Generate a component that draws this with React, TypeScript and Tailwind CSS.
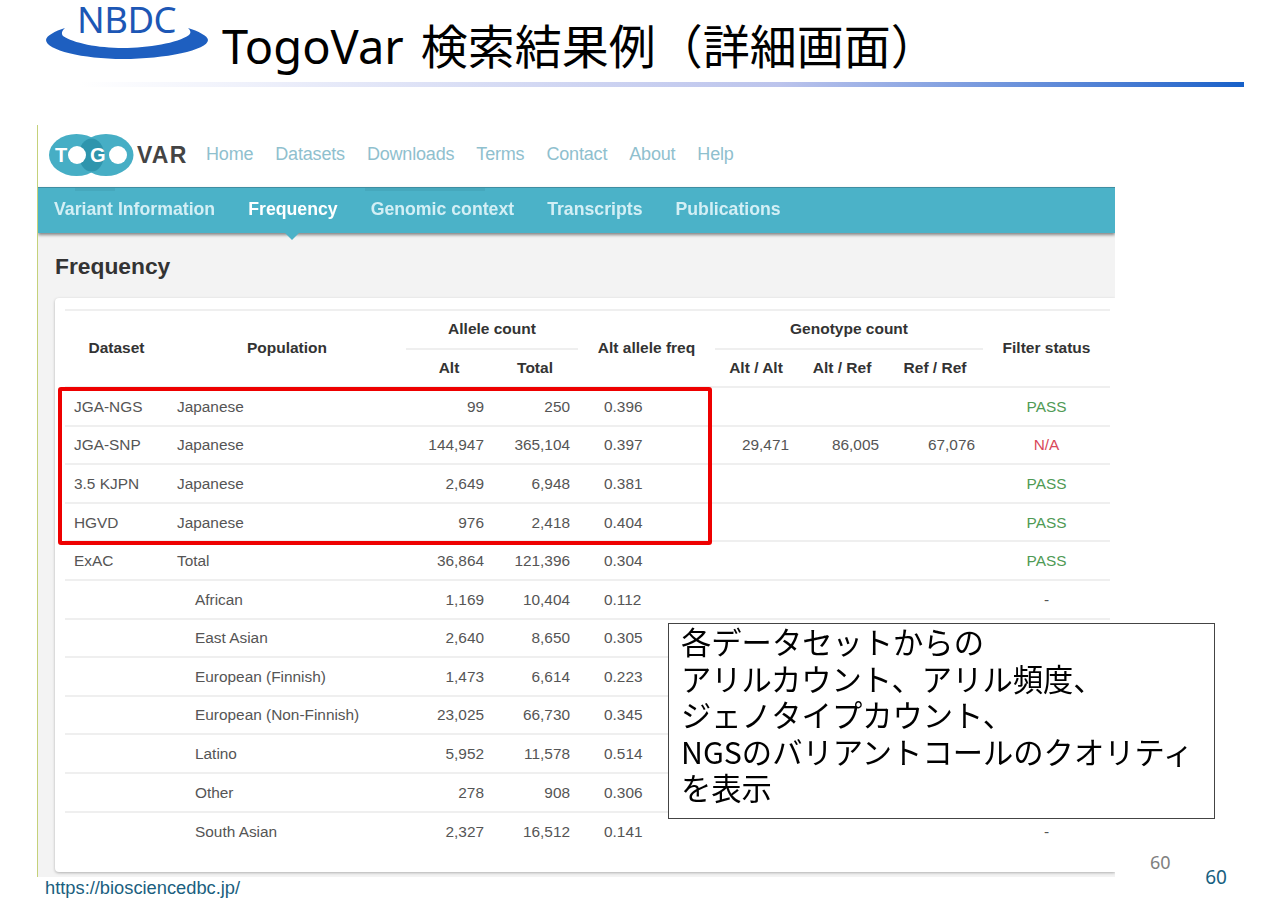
import React from "react";

const rows: [string, string, boolean, string, string, string, string, string, string, string][] = [
  ["JGA-NGS", "Japanese", false, "99", "250", "0.396", "", "", "", "PASS"],
  ["JGA-SNP", "Japanese", false, "144,947", "365,104", "0.397", "29,471", "86,005", "67,076", "N/A"],
  ["3.5 KJPN", "Japanese", false, "2,649", "6,948", "0.381", "", "", "", "PASS"],
  ["HGVD", "Japanese", false, "976", "2,418", "0.404", "", "", "", "PASS"],
  ["ExAC", "Total", false, "36,864", "121,396", "0.304", "", "", "", "PASS"],
  ["", "African", true, "1,169", "10,404", "0.112", "", "", "", "-"],
  ["", "East Asian", true, "2,640", "8,650", "0.305", "", "", "", ""],
  ["", "European (Finnish)", true, "1,473", "6,614", "0.223", "", "", "", ""],
  ["", "European (Non-Finnish)", true, "23,025", "66,730", "0.345", "", "", "", ""],
  ["", "Latino", true, "5,952", "11,578", "0.514", "", "", "", ""],
  ["", "Other", true, "278", "908", "0.306", "", "", "", ""],
  ["", "South Asian", true, "2,327", "16,512", "0.141", "", "", "", "-"],
];

function NbdcLogo() {
  return (
    <div className="relative ml-[43px] h-[62px] w-[170px] shrink-0">
      <svg width="170" height="62" viewBox="0 0 170 62">
        <path d="M22 28 C12 31 3 36 3 40 C3 50 40 59 80 59 C122 59 165 50 165 40 C165 36 155 31 145 28 C148 31 148 33 146 35 C135 43 105 48 80 48 C55 48 30 43 20 36 C18 33 19 31 22 28 Z" fill="#1e5fc0" />
      </svg>
      <span className="absolute left-[34px] top-[5px] text-[36.5px] leading-[28px] tracking-[-0.5px] text-[#1d57b5] font-['Noto_Sans',sans-serif]">NBDC</span>
    </div>
  );
}

function TogoLogo() {
  return (
    <svg width="142" height="44" viewBox="0 0 142 44" className="ml-[10px] shrink-0">
      <ellipse cx="28.5" cy="22" rx="27.5" ry="21" fill="#46aec5" />
      <ellipse cx="58" cy="22" rx="27.5" ry="21" fill="#46aec5" />
      <ellipse cx="43.5" cy="22" rx="12.5" ry="16.5" fill="#2e95ad" />
      <text x="7" y="29" fontFamily="'Liberation Sans', sans-serif" fontWeight="700" fontSize="20" fill="#ffffff">T</text>
      <circle cx="29" cy="22" r="9" fill="#ffffff" />
      <text x="42" y="29" fontFamily="'Liberation Sans', sans-serif" fontWeight="700" fontSize="20" fill="#ffffff">G</text>
      <circle cx="70" cy="22" r="9" fill="#ffffff" />
      <text x="89" y="30" fontFamily="'Liberation Sans', sans-serif" fontWeight="700" fontSize="23" letterSpacing="1.2" fill="#444444">VAR</text>
    </svg>
  );
}

export default function App() {
  return (
    <div className="relative w-[1280px] h-[905px] overflow-hidden bg-white font-['Liberation_Sans',sans-serif]">
      <header className="flex h-[82px] items-start">
        <NbdcLogo />
        <h1 className="ml-[9px] mt-[14px] text-[47px] leading-[64px] font-normal text-black whitespace-nowrap [word-spacing:5px] font-['Noto_Sans','Noto_Sans_CJK_JP',sans-serif]">
          TogoVar 検索結果例（詳細画面）
        </h1>
      </header>
      <div className="ml-[80px] mr-[36px] h-[5px] bg-linear-to-r from-white via-[#bcc4ec] via-60% to-[#1560c8]" />
      <div className="mt-[38px] flex">
        <div className="ml-[37px] w-[1078px] h-[752px] overflow-hidden border-l border-[#c5d17a]">
          <div className="h-full bg-[#f3f3f3] blur-[0.35px]">
            <nav className="flex h-[62px] items-center bg-white pb-[3px] text-[18px] text-[#8fc0ce]">
              <TogoLogo />
              <div className="ml-[16px] flex gap-[22px] tracking-[-0.18px]">
                <span>Home</span>
                <span>Datasets</span>
                <span>Downloads</span>
                <span>Terms</span>
                <span>Contact</span>
                <span>About</span>
                <span>Help</span>
              </div>
            </nav>
            <div className="relative flex h-[46px] items-center gap-[33px] border-t border-[#3f8ea2] bg-[#4bb2c8] pb-[2px] pl-[16px] text-[17.7px] font-bold text-[#d3eff5] shadow-[0_2px_3px_rgba(0,0,0,0.45)]">
              <div className="absolute left-[37px] top-0 h-[3px] w-[40px] bg-[#46a8bd]" />
              <div className="absolute left-[327px] top-0 h-[3px] w-[120px] bg-[#46a8bd]" />
              <span>Variant Information</span>
              <span className="text-white">Frequency</span>
              <span>Genomic context</span>
              <span>Transcripts</span>
              <span>Publications</span>
              <div className="absolute left-[247px] top-[45px] h-0 w-0 border-x-[7px] border-t-[7px] border-x-transparent border-t-[#4bb2c8]" />
            </div>
            <div className="flex h-[65px] items-center pl-[17px] pt-[1px] text-[22.8px] font-bold text-[#333333]">Frequency</div>
            <div className="ml-[17px] h-[574px] rounded-l-[4px] bg-white pl-[10px] pt-[11px] shadow-[0_1px_3px_rgba(0,0,0,0.28)]">
              <table className="w-[1045px] table-fixed border-collapse text-[15.4px] text-[#555555]">
                <colgroup>
                  <col className="w-[103px]" />
                  <col className="w-[238px]" />
                  <col className="w-[86px]" />
                  <col className="w-[86px]" />
                  <col className="w-[137px]" />
                  <col className="w-[82px]" />
                  <col className="w-[90px]" />
                  <col className="w-[96px]" />
                  <col className="w-[127px]" />
                </colgroup>
                <thead className="text-[15.5px] text-[#333333]">
                  <tr className="h-[38.5px] border-t-2 border-[#efefef]">
                    <th rowSpan={2} className="pb-[2px] font-bold">Dataset</th>
                    <th rowSpan={2} className="pb-[2px] font-bold">Population</th>
                    <th colSpan={2} className="border-b-2 border-[#efefef] pb-[1px] font-bold">Allele count</th>
                    <th rowSpan={2} className="pb-[2px] font-bold">Alt allele freq</th>
                    <th colSpan={3} className="border-b-2 border-[#efefef] pb-[1px] font-bold">Genotype count</th>
                    <th rowSpan={2} className="pb-[2px] font-bold">Filter status</th>
                  </tr>
                  <tr className="h-[38.5px] border-b-2 border-[#efefef]">
                    <th className="font-bold">Alt</th>
                    <th className="font-bold">Total</th>
                    <th className="font-bold">Alt / Alt</th>
                    <th className="font-bold">Alt / Ref</th>
                    <th className="font-bold">Ref / Ref</th>
                  </tr>
                </thead>
                <tbody>
                  {rows.map((r, i) => (
                    <tr key={i} className={i === rows.length - 1 ? "h-[38.6px]" : "h-[38.6px] border-b-2 border-[#efefef]"}>
                      <td className="pl-[9px]">{r[0]}</td>
                      <td className={r[2] ? "pl-[27px]" : "pl-[9px]"}>{r[1]}</td>
                      <td className="pr-[8px] text-right">{r[3]}</td>
                      <td className="pr-[8px] text-right">{r[4]}</td>
                      <td className="pl-[26px]">{r[5]}</td>
                      <td className="pr-[8px] text-right">{r[6]}</td>
                      <td className="pr-[8px] text-right">{r[7]}</td>
                      <td className="pr-[8px] text-right">{r[8]}</td>
                      <td className={r[9] === "PASS" ? "text-center text-[#4f9a55]" : r[9] === "N/A" ? "text-center text-[#d9485a]" : "text-center"}>{r[9]}</td>
                    </tr>
                  ))}
                </tbody>
              </table>
            </div>
          </div>
        </div>
        <div className="flex h-[752px] flex-col justify-end pb-[1px] pl-[35px] text-[18px] text-[#808080] font-['Noto_Sans',sans-serif]">60</div>
      </div>
      <footer className="flex items-start justify-between pl-[45px] pr-[53px]">
        <span className="text-[18.3px] leading-[21px] text-[#1b5f80]">https://biosciencedbc.jp/</span>
        <span className="-mt-[12px] text-[19px] leading-[24px] text-[#17607f] font-['Noto_Sans',sans-serif]">60</span>
      </footer>

      <div className="absolute left-[58px] top-[387px] h-[158px] w-[654px] rounded-[3px] border-4 border-[#ee0000]" />
      <div className="absolute left-[668px] top-[623px] flex h-[196px] w-[547px] flex-col border-[1.5px] border-[#444444] bg-white pl-[12px] text-[30.3px] leading-[36.5px] text-black font-['Noto_Sans_CJK_JP',sans-serif] whitespace-nowrap">
        <div className="-mt-px">各データセットからの</div>
        <div>アリルカウント、アリル頻度、</div>
        <div>ジェノタイプカウント、</div>
        <div>NGSのバリアントコールのクオリティ</div>
        <div>を表示</div>
      </div>
    </div>
  );
}
